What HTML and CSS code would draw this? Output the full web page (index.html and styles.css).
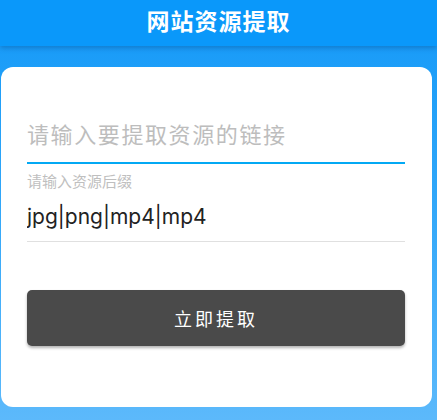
FILE: index.html
```html
<!DOCTYPE html>
<html lang="zh-CN">
<head>
<meta charset="utf-8">
<title>网站资源提取</title>
<link rel="stylesheet" href="styles.css">
</head>
<body>
<header class="topbar">
  <h1 class="title">网站资源提取</h1>
</header>
<main class="page">
  <section class="card">
    <div class="field field-url">
      <input class="input input-url" type="text" placeholder="请输入要提取资源的链接">
    </div>
    <div class="field field-ext">
      <label class="label">请输入资源后缀</label>
      <input class="input input-ext" type="text" value="jpg|png|mp4|mp4">
    </div>
    <button class="btn" type="button">立即提取</button>
  </section>
</main>
</body>
</html>
```

FILE: styles.css
```css
* { box-sizing: border-box; }
html, body { height: 100%; }
body {
  margin: 0;
  font-family: Roboto, "Noto Sans CJK SC", "Noto Sans", sans-serif;
  background: linear-gradient(to bottom, #1399f8 0%, #2fa6f9 45%, #5cb9fb 100%);
  overflow: hidden;
}
.topbar {
  height: 46px;
  background: #0a98fa;
  box-shadow: 0 2px 5px rgba(0, 60, 120, 0.35);
  display: flex;
  align-items: center;
  justify-content: center;
  position: relative;
  z-index: 1;
}
.title {
  margin: 0;
  color: #fff;
  font-size: 23px;
  font-weight: 700;
  line-height: 46px;
  letter-spacing: 1px;
}
.page {
  padding: 21px 5px 0 1px;
}
.card {
  height: 340px;
  background: #fff;
  border-radius: 12px;
  padding: 54px 27px 0 26px;
  display: flex;
  flex-direction: column;
}
.field { display: flex; flex-direction: column; }
.input {
  border: none;
  outline: none;
  background: transparent;
  font-family: inherit;
  padding: 0;
  margin: 0;
  width: 100%;
}
.field-url {
  border-bottom: 2px solid #03a9f4;
  padding-bottom: 11px;
}
.input-url {
  font-size: 22px;
  line-height: 30px;
  height: 30px;
  letter-spacing: 1.6px;
}
.input-url::placeholder { color: #bdbdbd; }
.field-ext {
  margin-top: 8px;
  border-bottom: 1px solid #e0e0e0;
  padding-bottom: 10px;
}
.label {
  font-size: 15px;
  line-height: 20px;
  color: #bfbfbf;
}
.input-ext {
  margin-top: 11px;
  font-family: Inter, Roboto, sans-serif;
  font-size: 21px;
  line-height: 28px;
  height: 28px;
  color: #222;
}
.btn {
  margin-top: 48px;
  height: 56px;
  border: none;
  border-radius: 5px;
  background: #4a4a4a;
  color: #fff;
  font-family: inherit;
  font-size: 18px;
  letter-spacing: 3px;
  box-shadow: 0 2px 3px rgba(0, 0, 0, 0.3);
  padding: 0;
}
```
